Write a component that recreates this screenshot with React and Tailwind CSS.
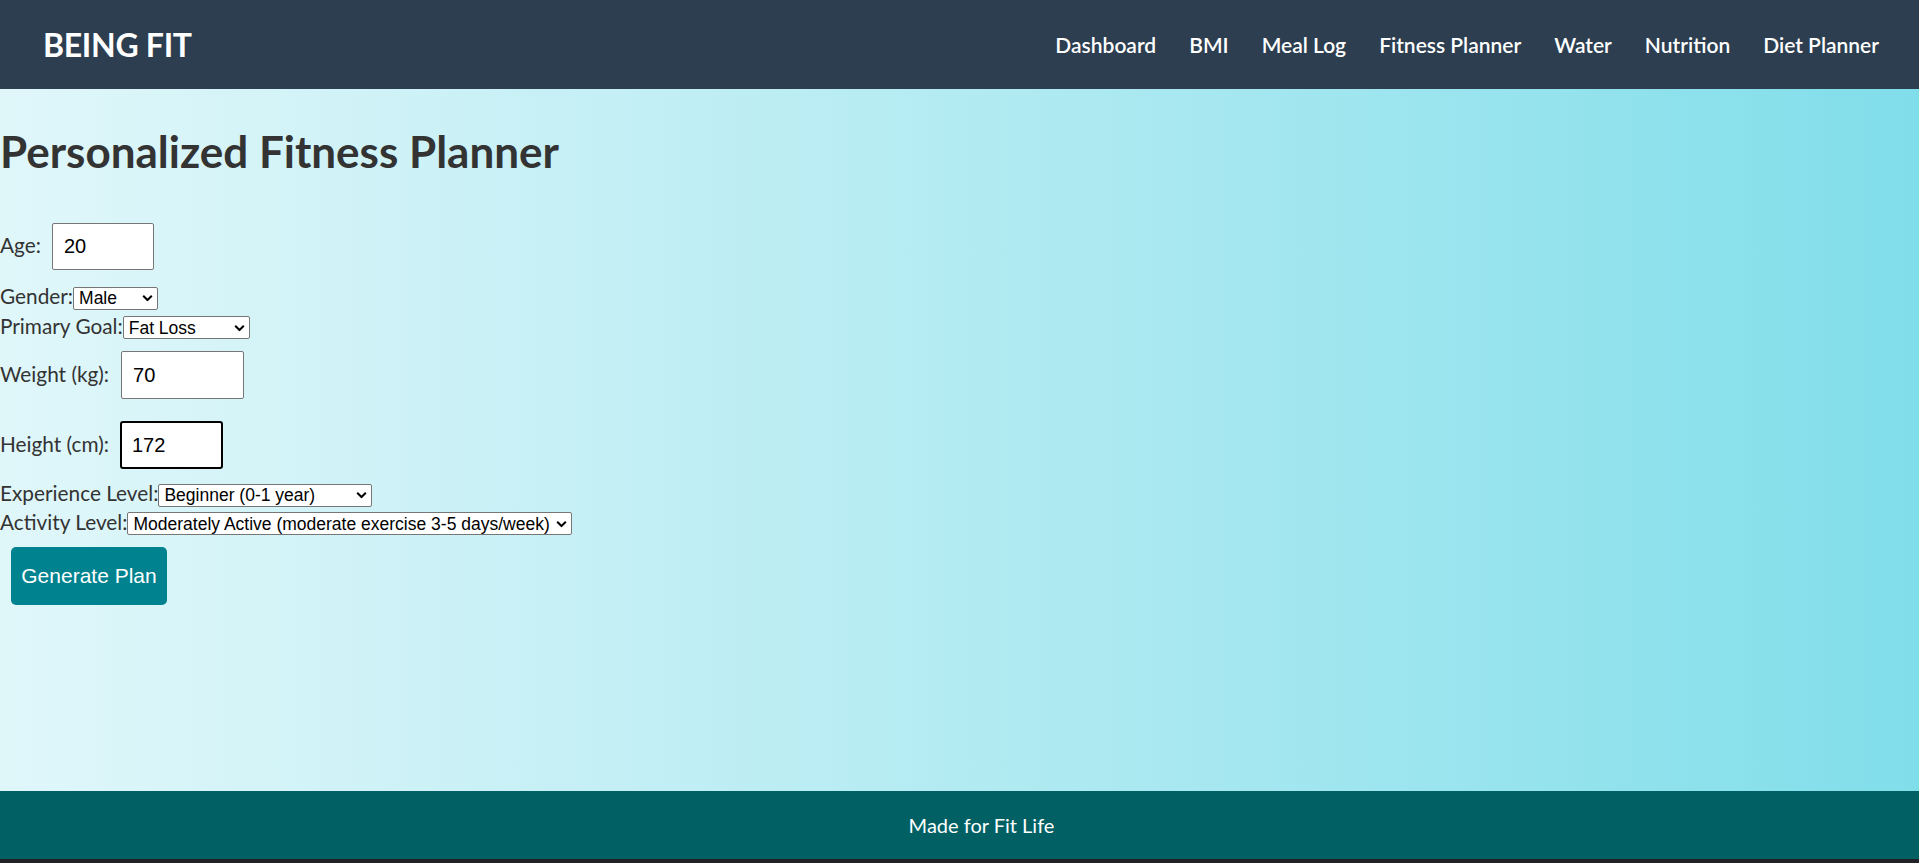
import React, { useState } from 'react';

const navLinks = ['Dashboard', 'BMI', 'Meal Log', 'Fitness Planner', 'Water', 'Nutrition', 'Diet Planner'];

const Chevron = () => (
  <svg
    className="pointer-events-none absolute right-[5px] top-1/2 -translate-y-1/2"
    width="11"
    height="7"
    viewBox="0 0 11 7"
    fill="none"
  >
    <path d="M1.2 1.2 L5.5 5.5 L9.8 1.2" stroke="#000" strokeWidth="2" />
  </svg>
);

const Select = ({ value, options, width }) => (
  <span className="relative inline-flex">
    <select
      defaultValue={value}
      className={`${width} h-[23px] appearance-none rounded-[2px] border border-[#767676] bg-white pl-[5px] pr-[18px] font-['Liberation_Sans',Arial,sans-serif] text-[17.5px] leading-[20px] text-black outline-none`}
    >
      {options.map((o) => (
        <option key={o}>{o}</option>
      ))}
    </select>
    <Chevron />
  </span>
);

const App = () => {
  const [form, setForm] = useState({ age: '20', weight: '70', height: '172' });

  const update = (key) => (e) => setForm({ ...form, [key]: e.target.value });

  return (
    <div className="h-screen flex flex-col font-['Lato','Open_Sans',sans-serif] overflow-hidden">
      {/* Header */}
      <header className="h-[89px] shrink-0 bg-[#2c3e50] flex items-center justify-between pl-[43px] pr-[40px]">
        <h2 className="text-[32px] font-bold text-white leading-none tracking-[-0.3px]">BEING FIT</h2>
        <nav className="flex items-center gap-[33px]">
          {navLinks.map((link) => (
            <a key={link} href="#" className="text-[21px] font-semibold text-white leading-none">
              {link}
            </a>
          ))}
        </nav>
      </header>

      {/* Main */}
      <main className="flex-1 bg-linear-to-r from-[#e0f7fa] to-[#80deea] text-[#333]">
        <h1 className="mt-[40px] text-[44px] font-bold leading-none text-[#333]">Personalized Fitness Planner</h1>

        <div className="mt-[50px] text-[20.8px] leading-[20px]">
          <div className="flex items-baseline">
            <label>Age:</label>
            <input
              type="number"
              value={form.age}
              onChange={update('age')}
              className="ml-[11px] w-[102px] h-[47px] rounded-[2px] border border-[#767676] bg-white px-[11px] font-['Liberation_Sans',Arial,sans-serif] text-[20px] text-black outline-none"
            />
          </div>

          <div className="mt-[16px] flex items-baseline">
            <label>Gender:</label>
            <Select value="Male" options={['Male', 'Female', 'Other']} width="w-[85px]" />
          </div>

          <div className="mt-[6px] flex items-baseline">
            <label>Primary Goal:</label>
            <Select value="Fat Loss" options={['Fat Loss', 'Muscle Gain', 'Maintenance']} width="w-[127px]" />
          </div>

          <div className="mt-[12px] flex items-baseline">
            <label>Weight (kg):</label>
            <input
              type="number"
              value={form.weight}
              onChange={update('weight')}
              className="ml-[12px] w-[123px] h-[48px] rounded-[2px] border border-[#767676] bg-white px-[11px] font-['Liberation_Sans',Arial,sans-serif] text-[20px] text-black outline-none"
            />
          </div>

          <div className="mt-[22px] flex items-baseline">
            <label>Height (cm):</label>
            <input
              type="number"
              value={form.height}
              onChange={update('height')}
              className="ml-[11px] w-[103px] h-[48px] rounded-[3px] border-2 border-black bg-white px-[10px] font-['Liberation_Sans',Arial,sans-serif] text-[20px] text-black outline-none"
            />
          </div>

          <div className="mt-[14px] flex items-baseline">
            <label>Experience Level:</label>
            <Select
              value="Beginner (0-1 year)"
              options={['Beginner (0-1 year)', 'Intermediate (1-3 years)', 'Advanced (3+ years)']}
              width="w-[214px]"
            />
          </div>

          <div className="mt-[5px] flex items-baseline">
            <label>Activity Level:</label>
            <Select
              value="Moderately Active (moderate exercise 3-5 days/week)"
              options={[
                'Sedentary (little or no exercise)',
                'Lightly Active (light exercise 1-3 days/week)',
                'Moderately Active (moderate exercise 3-5 days/week)',
                'Very Active (hard exercise 6-7 days/week)',
              ]}
              width="w-[445px]"
            />
          </div>

          <button className="mt-[12px] ml-[11px] h-[58px] w-[156px] rounded-[5px] bg-[#00838f] font-['Liberation_Sans',Arial,sans-serif] text-[21px] text-white">
            Generate Plan
          </button>
        </div>
      </main>

      {/* Footer */}
      <footer className="h-[68px] shrink-0 bg-[#006064] flex items-center justify-center pl-[44px]">
        <p className="text-[20px] text-white leading-none">Made for Fit Life</p>
      </footer>
      <div className="h-[4px] shrink-0 bg-[#222226]" />
    </div>
  );
};

export default App;
